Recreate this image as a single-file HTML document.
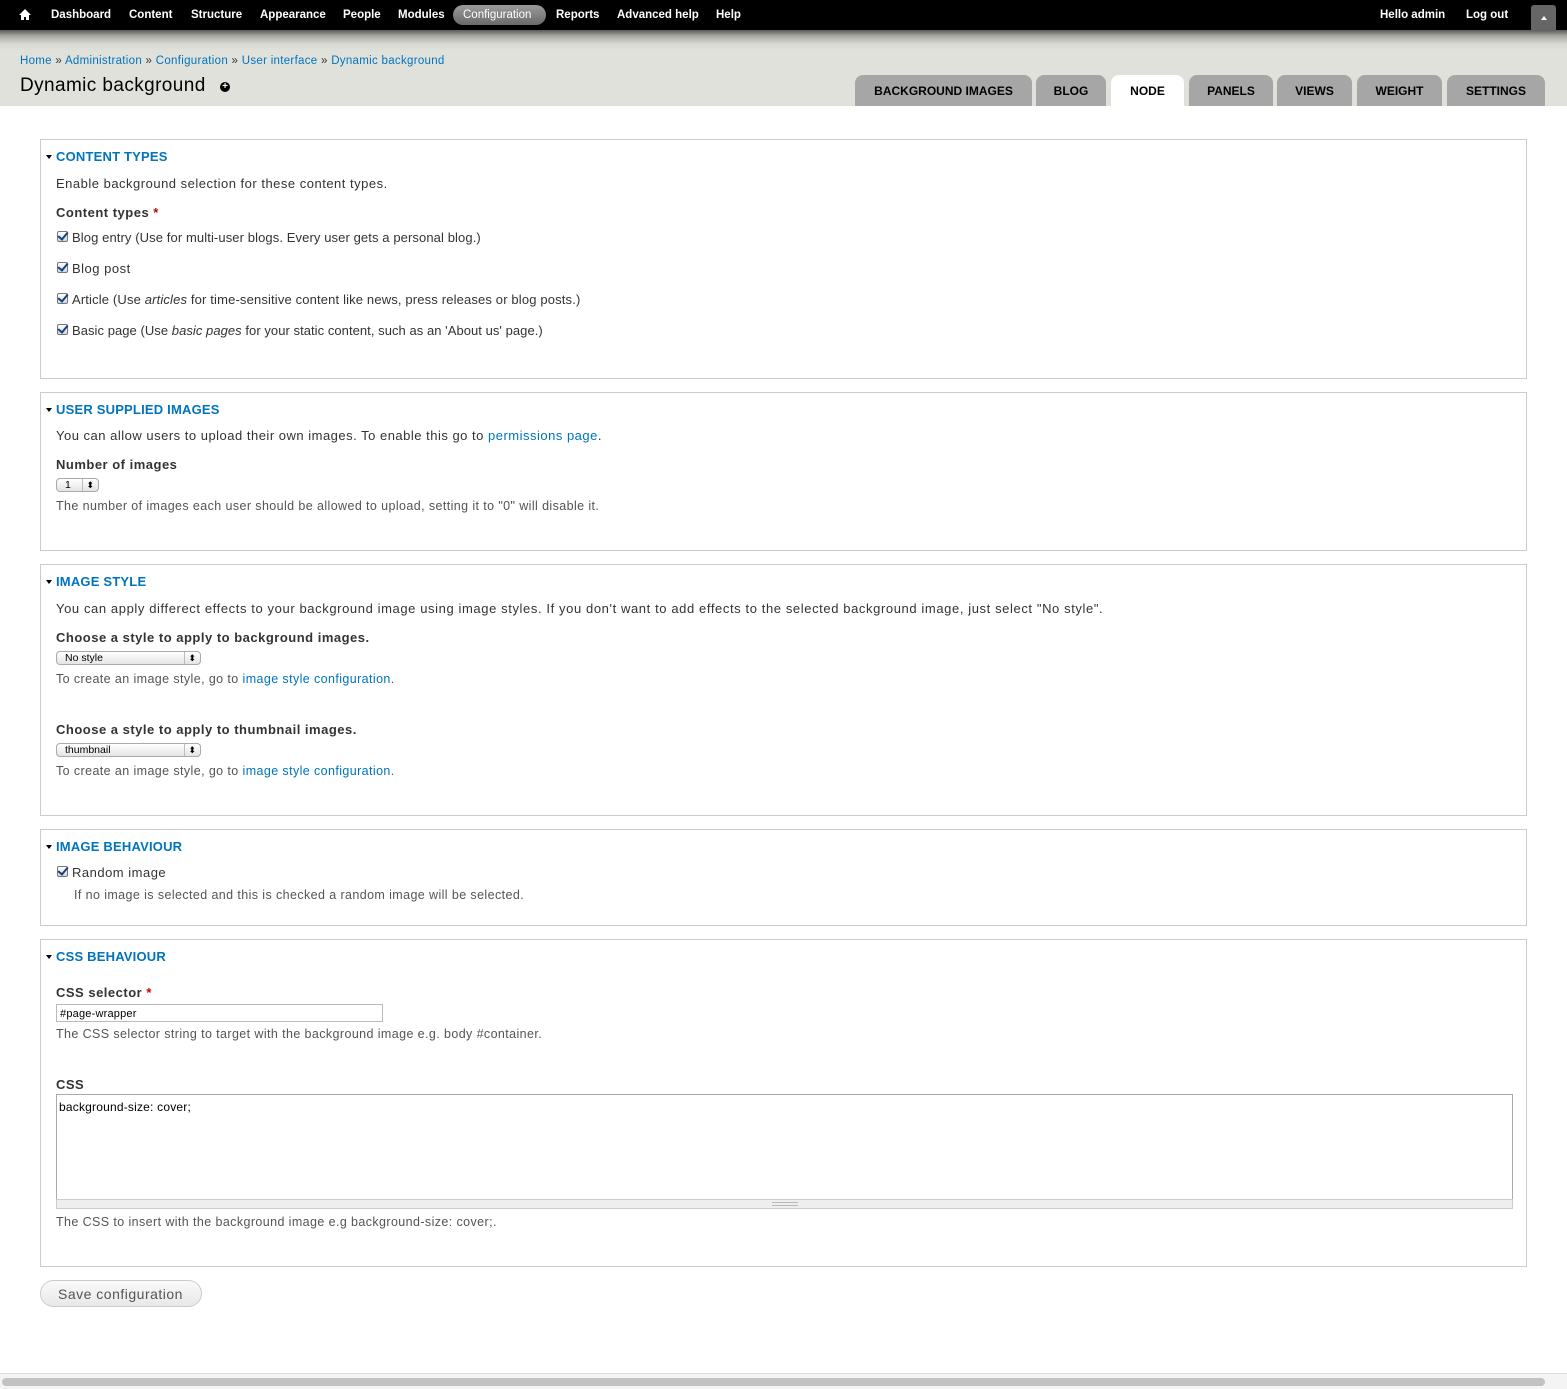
<!DOCTYPE html>
<html><head><meta charset="utf-8"><style>
*{margin:0;padding:0;box-sizing:border-box}
body{width:1567px;height:1389px;position:relative;background:#fff;font-family:"Liberation Sans",sans-serif;font-size:13px;color:#333;overflow:hidden}
.a{position:absolute;white-space:nowrap;line-height:16px;letter-spacing:0.5px;margin-top:1px}
.nav{color:#fff;font-weight:bold;font-size:11.5px;top:7px;letter-spacing:0;margin-top:0}
a,.lk{color:#0074bd;text-decoration:none}
.tab{position:absolute;top:75px;height:31px;background:#a6a6a6;border-radius:8px 8px 0 0;font-size:12px;font-weight:bold;color:#000;text-align:center;line-height:32px}
.fs{position:absolute;left:40px;width:1487px;border:1px solid #ccc}
.lg{font-weight:bold;color:#0074bd;text-transform:uppercase;left:56px;letter-spacing:0.2px}
.lg:before{content:"";position:absolute;left:-10px;top:6px;border-left:3.5px solid transparent;border-right:3.5px solid transparent;border-top:4px solid #000}
.b{font-weight:bold;letter-spacing:0.5px}
.d{color:#555;font-size:12.5px;letter-spacing:0.4px}
.cb{position:absolute;width:11px;height:11px;border:1px solid #777;border-radius:2px;background:linear-gradient(#fff,#cfd8e4)}
.cb:after{content:"";position:absolute;left:2px;top:-2px;width:4px;height:8px;border:solid #1b3f7a;border-width:0 2px 2px 0;transform:rotate(40deg)}
.sel{position:absolute;height:14px;border:1px solid #aaa;border-radius:4px;background:linear-gradient(#fff,#e4e4e4);font-size:10.5px;line-height:12px;padding-left:8px;color:#000}
.sel:after{content:"⬍";position:absolute;right:4px;top:0;font-size:9px}
.sel i{position:absolute;top:0;bottom:0;width:1px;background:#bbb}
.req{color:#c00}
</style></head><body>
<div style="position:absolute;left:0;top:0;width:1567px;height:30px;background:#000"></div>
<div style="position:absolute;left:0;top:30px;width:1567px;height:76px;background:linear-gradient(#5a5a57 0,#a9a9a4 6px,#d8d8d2 14px,#e1e1db 20px,#e1e1db)"></div>
<svg style="position:absolute;left:19px;top:9px" width="12" height="11" viewBox="0 0 12 11"><path d="M6 0L0 6h2v5h3V8h2v3h3V6h2z" fill="#fff"/></svg>
<div class="a nav" style="left:51px">Dashboard</div>
<div class="a nav" style="left:129px">Content</div>
<div class="a nav" style="left:191px">Structure</div>
<div class="a nav" style="left:260px">Appearance</div>
<div class="a nav" style="left:343px">People</div>
<div class="a nav" style="left:398px">Modules</div>
<div style="position:absolute;left:453px;top:5px;width:93px;height:20px;border-radius:10px;background:linear-gradient(#9a9a9a,#6a6a6a)"></div>
<div class="a nav" style="left:463px;font-weight:normal">Configuration</div>
<div class="a nav" style="left:556px">Reports</div>
<div class="a nav" style="left:617px">Advanced help</div>
<div class="a nav" style="left:716px">Help</div>
<div class="a nav" style="left:1380px">Hello admin</div>
<div class="a nav" style="left:1466px">Log out</div>
<div style="position:absolute;left:1531px;top:5px;width:25px;height:25px;background:#666;border-radius:3px 3px 0 0"></div>
<div style="position:absolute;left:1541px;top:16px;border-left:3px solid transparent;border-right:3px solid transparent;border-bottom:4px solid #fff"></div>
<div class="a" style="left:20px;top:52px;font-size:11.5px;color:#333;letter-spacing:0.3px"><a>Home</a> » <a>Administration</a> » <a>Configuration</a> » <a>User interface</a> » <a>Dynamic background</a></div>
<div class="a" style="left:20px;top:74px;font-size:19px;line-height:22px;color:#000;letter-spacing:0.4px">Dynamic background</div>
<div style="position:absolute;left:220px;top:82px;width:10px;height:10px;border-radius:50%;background:#000"></div>
<div class="a" style="left:220px;top:78px;width:10px;text-align:center;color:#fff;font-size:10px;font-weight:bold;letter-spacing:0">+</div>
<div class="tab" style="left:855px;width:177px">BACKGROUND IMAGES</div>
<div class="tab" style="left:1036px;width:70px">BLOG</div>
<div class="tab" style="left:1111px;width:73px;background:#fff">NODE</div>
<div class="tab" style="left:1189px;width:84px">PANELS</div>
<div class="tab" style="left:1277px;width:75px">VIEWS</div>
<div class="tab" style="left:1357px;width:85px">WEIGHT</div>
<div class="tab" style="left:1447px;width:98px">SETTINGS</div>

<div class="fs" style="top:139px;height:240px"></div>
<div class="a lg" style="top:148px">Content types</div>
<div class="a" style="left:56px;top:175px">Enable background selection for these content types.</div>
<div class="a b" style="left:56px;top:204px">Content types <span class="req">*</span></div>
<div class="cb" style="left:57px;top:231px"></div><div class="a" style="left:72px;top:229px;letter-spacing:0.1px">Blog entry (Use for multi-user blogs. Every user gets a personal blog.)</div>
<div class="cb" style="left:57px;top:262px"></div><div class="a" style="left:72px;top:260px">Blog post</div>
<div class="cb" style="left:57px;top:293px"></div><div class="a" style="left:72px;top:291px;letter-spacing:0.15px">Article (Use <i>articles</i> for time-sensitive content like news, press releases or blog posts.)</div>
<div class="cb" style="left:57px;top:324px"></div><div class="a" style="left:72px;top:322px;letter-spacing:0.05px">Basic page (Use <i>basic pages</i> for your static content, such as an 'About us' page.)</div>

<div class="fs" style="top:392px;height:159px"></div>
<div class="a lg" style="top:401px">User supplied images</div>
<div class="a" style="left:56px;top:427px">You can allow users to upload their own images. To enable this go to <a>permissions page</a>.</div>
<div class="a b" style="left:56px;top:456px">Number of images</div>
<div class="sel" style="left:56px;top:478px;width:43px">1<i style="left:25px"></i></div>
<div class="a d" style="left:56px;top:497px">The number of images each user should be allowed to upload, setting it to "0" will disable it.</div>

<div class="fs" style="top:564px;height:252px"></div>
<div class="a lg" style="top:573px">Image style</div>
<div class="a" style="left:56px;top:600px;letter-spacing:0.6px">You can apply differect effects to your background image using image styles. If you don't want to add effects to the selected background image, just select "No style".</div>
<div class="a b" style="left:56px;top:629px">Choose a style to apply to background images.</div>
<div class="sel" style="left:56px;top:651px;width:145px">No style<i style="left:127px"></i></div>
<div class="a d" style="left:56px;top:670px">To create an image style, go to <a>image style configuration</a>.</div>
<div class="a b" style="left:56px;top:721px">Choose a style to apply to thumbnail images.</div>
<div class="sel" style="left:56px;top:743px;width:145px">thumbnail<i style="left:127px"></i></div>
<div class="a d" style="left:56px;top:762px">To create an image style, go to <a>image style configuration</a>.</div>

<div class="fs" style="top:829px;height:97px"></div>
<div class="a lg" style="top:838px">Image behaviour</div>
<div class="cb" style="left:57px;top:866px"></div><div class="a" style="left:72px;top:864px">Random image</div>
<div class="a d" style="left:74px;top:886px">If no image is selected and this is checked a random image will be selected.</div>

<div class="fs" style="top:939px;height:328px"></div>
<div class="a lg" style="top:948px">CSS behaviour</div>
<div class="a b" style="left:56px;top:984px">CSS selector <span class="req">*</span></div>
<div style="position:absolute;left:56px;top:1004px;width:327px;height:18px;border:1px solid #bbb"></div>
<div class="a" style="left:60px;top:1005px;font-size:11px;color:#000;letter-spacing:0.2px">#page-wrapper</div>
<div class="a d" style="left:56px;top:1025px">The CSS selector string to target with the background image e.g. body #container.</div>
<div class="a b" style="left:56px;top:1076px">CSS</div>
<div style="position:absolute;left:56px;top:1094px;width:1457px;height:106px;border:1px solid #aaa;border-bottom:none"></div>
<div class="a" style="left:59px;top:1098px;font-size:12px;color:#000;letter-spacing:0.2px">background-size: cover;</div>
<div style="position:absolute;left:56px;top:1199px;width:1457px;height:10px;background:#eee;border:1px solid #ccc"></div>
<div style="position:absolute;left:772px;top:1202px;width:26px;height:4px;border-top:1px solid #bbb;border-bottom:1px solid #bbb"></div>
<div class="a d" style="left:56px;top:1213px">The CSS to insert with the background image e.g background-size: cover;.</div>

<div style="position:absolute;left:40px;top:1280px;width:162px;height:27px;border:1px solid #ccc;border-radius:14px;background:linear-gradient(#fafafa,#e8e8e8)"></div>
<div class="a" style="left:58px;top:1285px;font-size:14px;color:#555;letter-spacing:0.5px">Save configuration</div>
<div style="position:absolute;left:0;top:1373px;width:1567px;height:16px;background:#f4f4f4;border-top:1px solid #ddd"></div>
<div style="position:absolute;left:2px;top:1378px;width:1543px;height:8px;border-radius:4px;background:#c2c2c2"></div>
</body></html>
